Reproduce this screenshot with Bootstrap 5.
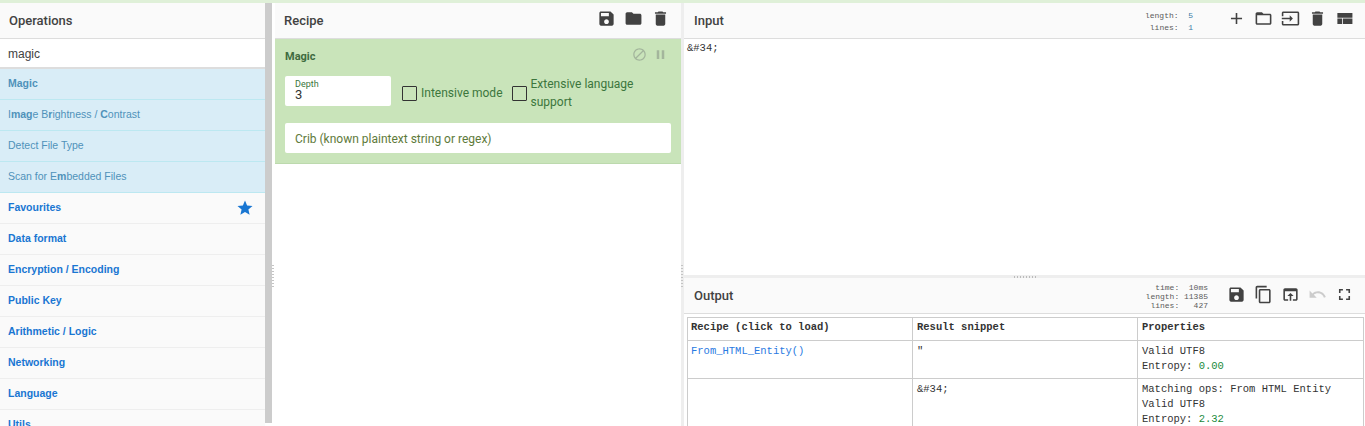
<!DOCTYPE html>
<html lang="en">
<head>
<meta charset="utf-8">
<title>CyberChef</title>
<link href="https://cdn.jsdelivr.net/npm/bootstrap@5.3.0/dist/css/bootstrap.min.css" rel="stylesheet">
<style>
html,body{height:426px;overflow:hidden;background:#fff;}
body{font-family:Roboto,"Liberation Sans",Arial,sans-serif;color:#333;}
.topstrip{height:3px;background:#dff0d8;}
.shell{height:423px;}
.paneops{width:265px;background:#fafafa;}
.sbar{width:7px;background:#ccc;height:420px;}
.vgut{width:3px;background:#fff;position:relative;}
.panerecipe{width:406px;}
.gut2{width:3px;background:#eee;position:relative;}
.ptitle{height:36px;background:#fafafa;border-bottom:1px solid #ddd;padding:1px 9px 0;font-family:Roboto,sans-serif;font-weight:500;font-size:13px;color:#424242;flex:none;}
.ptitle.pad10{padding-left:10px;}
.searchbox{height:30px;border-bottom:2px solid #ddd;background:#fff;padding:1px 8px 0;font-family:"Liberation Sans",Arial,sans-serif;font-size:12px;color:#424242;}
.oprow{height:31px;padding:0 8px;font-family:"Liberation Sans",Arial,sans-serif;font-size:10.5px;display:flex;align-items:center;border-bottom:1px solid #eee;color:#1976d2;font-weight:700;background:#fafafa;}
.oprow.hit{background:#d9edf7;border-bottom-color:#bce8f1;color:#4f92ba;font-weight:400;}
.oprow.hit b{font-weight:700;}
.oprow.hit.lead1{font-weight:700;}
.ico{fill:#424242;display:block;flex:none;}
.hicons{gap:8px;margin-right:2px;margin-bottom:6px;}
.outhead .hicons{margin-bottom:4px;}
.starico{fill:#1976d2;margin-right:3px;}
.mutedico{fill:#a3b59c;}
.undoico{fill:#ccc;}
.opcard{background:#c9e4ba;border-bottom:1px solid #bcd9ad;height:125px;padding:8px 10px 0;color:#3c763d;font-size:12px;}
.opname{font-family:Roboto,sans-serif;font-weight:700;font-size:11px;line-height:13px;margin-top:3px;color:#3f6b3f;}
.ctlicons{gap:6px;margin-right:3px;}
.fldrow{margin-top:12px;height:36px;}
.fldbox{background:#fff;border-radius:2px;height:30px;width:106px;margin-top:1px;padding:3px 10px;}
.fldlabel{font-size:9px;line-height:10px;color:#3c763d;}
.fldval{font-size:13px;line-height:11px;color:#333;}
.tick{width:15px;height:15px;border:1px solid #333;border-radius:1px;flex:none;margin-right:4px;}
.ckrow{font-size:12px;line-height:18px;color:#3c763d;}
.ckfirst{margin-left:11px;white-space:nowrap;}
.cksecond{margin-left:9px;}
.cribbox{background:#fff;border-radius:2px;height:30px;margin-top:12px;padding:1px 10px 0;font-size:12px;color:#5e7a3a;}
.stats{font-family:"Liberation Mono",monospace;font-size:8px;color:#5a5a5a;white-space:pre;text-align:right;}
.stats i{font-style:normal;color:#3a7ca5;}
.statsin{line-height:12px;margin-right:34px;margin-bottom:-2px;}
.statsout{line-height:9px;margin-right:19px;}
.inbody{height:236px;padding:3px 3px;line-height:12px;font-family:"Liberation Mono",monospace;font-size:10.5px;color:#333;}
.hgut{height:3px;background:#eee;flex:none;position:relative;}
.rtable{table-layout:fixed;width:676px;border-collapse:collapse;font-family:"Liberation Mono",monospace;font-size:10.5px;line-height:15px;color:#333;margin:3px 0 0 3px;}
.rtable th,.rtable td{border:1px solid #ccc;padding:3px 3px 4px 4px;vertical-align:top;}
.rtable th{font-weight:700;padding:2px 3px 5px 4px;}
.rtable th:first-child,.rtable td:first-child{padding-left:3px;}
.col1{width:225px;}
.col3{width:226px;}
.rlink{color:#2a7ae2;}
.grn{color:#1a8a3a;}
.outhead{height:36px;}
.hdots{position:absolute;left:330px;top:1px;width:24px;height:2px;background-image:linear-gradient(90deg,#bbb 1px,transparent 1px);background-size:3px 2px;}
.vdots{position:absolute;left:0;top:262px;width:2px;height:24px;background-image:linear-gradient(#c4c4c4 1px,transparent 1px);background-size:2px 3px;}
</style>
</head>
<body>
<svg width="0" height="0" class="position-absolute">
<defs>
<symbol id="i-save" viewBox="0 0 24 24"><path d="M17 3H5c-1.11 0-2 .9-2 2v14c0 1.1.89 2 2 2h14c1.1 0 2-.9 2-2V7l-4-4zm-5 16c-1.66 0-3-1.34-3-3s1.34-3 3-3 3 1.34 3 3-1.34 3-3 3zm3-10H5V5h10v4z"/></symbol>
<symbol id="i-folder" viewBox="0 0 24 24"><path d="M10 4H4c-1.1 0-1.99.9-1.99 2L2 18c0 1.1.9 2 2 2h16c1.1 0 2-.9 2-2V8c0-1.1-.9-2-2-2h-8l-2-2z"/></symbol>
<symbol id="i-del" viewBox="0 0 24 24"><path d="M6 19c0 1.1.9 2 2 2h8c1.1 0 2-.9 2-2V7H6v12zM19 4h-3.5l-1-1h-5l-1 1H5v2h14V4z"/></symbol>
<symbol id="i-add" viewBox="0 0 24 24"><path d="M19 13h-6v6h-2v-6H5v-2h6V5h2v6h6v2z"/></symbol>
<symbol id="i-fopen" viewBox="0 0 24 24"><path d="M20 6h-8l-2-2H4c-1.1 0-1.99.9-1.99 2L2 18c0 1.1.9 2 2 2h16c1.1 0 2-.9 2-2V8c0-1.1-.9-2-2-2zm0 12H4V8h16v10z"/></symbol>
<symbol id="i-input" viewBox="0 0 24 24"><path d="M21 3.01H3c-1.1 0-2 .9-2 2V9h2V4.99h18v14.03H3V15H1v4.01c0 1.1.9 1.98 2 1.98h18c1.1 0 2-.88 2-1.98v-14c0-1.11-.9-2-2-2zM11 16l4-4-4-4v3H1v2h10v3z"/></symbol>
<symbol id="i-view" viewBox="0 0 24 24"><path d="M3 19h6v-7H3v7zm7 0h12v-7H10v7zM3 5v6h19V5H3z"/></symbol>
<symbol id="i-copy" viewBox="0 0 24 24"><path d="M16 1H4c-1.1 0-2 .9-2 2v14h2V3h12V1zm3 4H8c-1.1 0-2 .9-2 2v14c0 1.1.9 2 2 2h11c1.1 0 2-.9 2-2V7c0-1.1-.9-2-2-2zm0 16H8V7h11v14z"/></symbol>
<symbol id="i-open" viewBox="0 0 24 24"><path d="M19 4H5c-1.11 0-2 .9-2 2v12c0 1.1.89 2 2 2h4v-2H5V8h14v10h-4v2h4c1.1 0 2-.9 2-2V6c0-1.1-.89-2-2-2zm-7 6l-4 4h3v6h2v-6h3l-4-4z"/></symbol>
<symbol id="i-undo" viewBox="0 0 24 24"><path d="M12.5 8c-2.65 0-5.05.99-6.9 2.6L2 7v9h9l-3.62-3.62c1.39-1.16 3.16-1.88 5.12-1.88 3.54 0 6.55 2.31 7.6 5.5l2.37-.78C21.08 11.03 17.15 8 12.5 8z"/></symbol>
<symbol id="i-full" viewBox="0 0 24 24"><path d="M7 14H5v5h5v-2H7v-3zm-2-4h2V7h3V5H5v5zm12 7h-3v2h5v-5h-2v3zM14 5v2h3v3h2V5h-5z"/></symbol>
<symbol id="i-block" viewBox="0 0 24 24"><path d="M12 2C6.48 2 2 6.48 2 12s4.48 10 10 10 10-4.48 10-10S17.52 2 12 2zM4 12c0-4.42 3.58-8 8-8 1.85 0 3.55.63 4.9 1.69L5.69 16.9C4.63 15.55 4 13.85 4 12zm8 8c-1.85 0-3.55-.63-4.9-1.69L18.31 7.1C19.37 8.45 20 10.15 20 12c0 4.42-3.58 8-8 8z"/></symbol>
<symbol id="i-pause" viewBox="0 0 24 24"><path d="M6 19h4V5H6v14zm8-14v14h4V5h-4z"/></symbol>
<symbol id="i-star" viewBox="0 0 24 24"><path d="M12 17.27L18.18 21l-1.64-7.03L22 9.24l-7.19-.61L12 2 9.19 8.63 2 9.24l5.46 4.73L5.82 21z"/></symbol>
</defs>
</svg>
<div class="topstrip"></div>
<div class="shell d-flex">
  <div class="paneops d-flex flex-column flex-shrink-0 overflow-hidden">
    <div class="ptitle d-flex align-items-center">Operations</div>
    <div class="searchbox d-flex align-items-center flex-shrink-0">magic</div>
    <div class="oprow hit lead1 flex-shrink-0">Magic</div>
    <div class="oprow hit flex-shrink-0"><span>I<b>mag</b>e B<b>r</b>ightness / <b>C</b>ontrast</span></div>
    <div class="oprow hit flex-shrink-0">Detect File Type</div>
    <div class="oprow hit flex-shrink-0"><span>Scan for E<b>m</b>bedded Files</span></div>
    <div class="oprow justify-content-between flex-shrink-0">Favourites<svg class="ico starico" width="18" height="18"><use href="#i-star"/></svg></div>
    <div class="oprow flex-shrink-0">Data format</div>
    <div class="oprow flex-shrink-0">Encryption / Encoding</div>
    <div class="oprow flex-shrink-0">Public Key</div>
    <div class="oprow flex-shrink-0">Arithmetic / Logic</div>
    <div class="oprow flex-shrink-0">Networking</div>
    <div class="oprow flex-shrink-0">Language</div>
    <div class="oprow flex-shrink-0">Utils</div>
  </div>
  <div class="sbar flex-shrink-0"></div>
  <div class="vgut flex-shrink-0"><span class="vdots"></span></div>
  <div class="panerecipe d-flex flex-column flex-shrink-0">
    <div class="ptitle d-flex align-items-center justify-content-between">
      <span>Recipe</span>
      <div class="d-flex hicons">
        <svg class="ico" width="19" height="19"><use href="#i-save"/></svg>
        <svg class="ico" width="19" height="19"><use href="#i-folder"/></svg>
        <svg class="ico" width="19" height="19"><use href="#i-del"/></svg>
      </div>
    </div>
    <div class="opcard">
      <div class="d-flex justify-content-between align-items-start">
        <span class="opname">Magic</span>
        <div class="d-flex ctlicons">
          <svg class="ico mutedico" width="15" height="15"><use href="#i-block"/></svg>
          <svg class="ico mutedico" width="15" height="15"><use href="#i-pause"/></svg>
        </div>
      </div>
      <div class="d-flex align-items-start fldrow">
        <div class="fldbox flex-shrink-0"><div class="fldlabel">Depth</div><div class="fldval">3</div></div>
        <div class="d-flex align-items-center align-self-center ckrow ckfirst"><span class="tick"></span>Intensive mode</div>
        <div class="d-flex align-items-center align-self-center ckrow cksecond"><span class="tick"></span><span>Extensive language support</span></div>
      </div>
      <div class="cribbox d-flex align-items-center">Crib (known plaintext string or regex)</div>
    </div>
  </div>
  <div class="gut2 flex-shrink-0"><span class="vdots"></span></div>
  <div class="flex-grow-1 d-flex flex-column overflow-hidden">
    <div class="ptitle pad10 d-flex align-items-center justify-content-between">
      <span>Input</span>
      <div class="d-flex align-items-center">
        <div class="stats statsin">length:  <i>5</i>
lines:  <i>1</i></div>
        <div class="d-flex hicons">
          <svg class="ico" width="19" height="19"><use href="#i-add"/></svg>
          <svg class="ico" width="19" height="19"><use href="#i-fopen"/></svg>
          <svg class="ico" width="19" height="19"><use href="#i-input"/></svg>
          <svg class="ico" width="19" height="19"><use href="#i-del"/></svg>
          <svg class="ico" width="19" height="19"><use href="#i-view"/></svg>
        </div>
      </div>
    </div>
    <div class="inbody flex-shrink-0">&amp;#34;</div>
    <div class="hgut"><span class="hdots"></span></div>
    <div class="ptitle pad10 outhead d-flex align-items-center justify-content-between">
      <span>Output</span>
      <div class="d-flex align-items-center">
        <div class="stats statsout">time:  10ms
length: 11385
lines:   427</div>
        <div class="d-flex hicons">
          <svg class="ico" width="19" height="19"><use href="#i-save"/></svg>
          <svg class="ico" width="19" height="19"><use href="#i-copy"/></svg>
          <svg class="ico" width="19" height="19"><use href="#i-open"/></svg>
          <svg class="ico undoico" width="19" height="19"><use href="#i-undo"/></svg>
          <svg class="ico" width="19" height="19"><use href="#i-full"/></svg>
        </div>
      </div>
    </div>
    <table class="rtable">
      <colgroup><col class="col1"><col class="col1"><col class="col3"></colgroup>
      <tr><th>Recipe (click to load)</th><th>Result snippet</th><th>Properties</th></tr>
      <tr><td><span class="rlink">From_HTML_Entity()</span></td><td>"</td><td>Valid UTF8<br>Entropy: <span class="grn">0.00</span></td></tr>
      <tr><td></td><td>&amp;#34;</td><td>Matching ops: From HTML Entity<br>Valid UTF8<br>Entropy: <span class="grn">2.32</span></td></tr>
    </table>
  </div>
</div>
</body>
</html>
